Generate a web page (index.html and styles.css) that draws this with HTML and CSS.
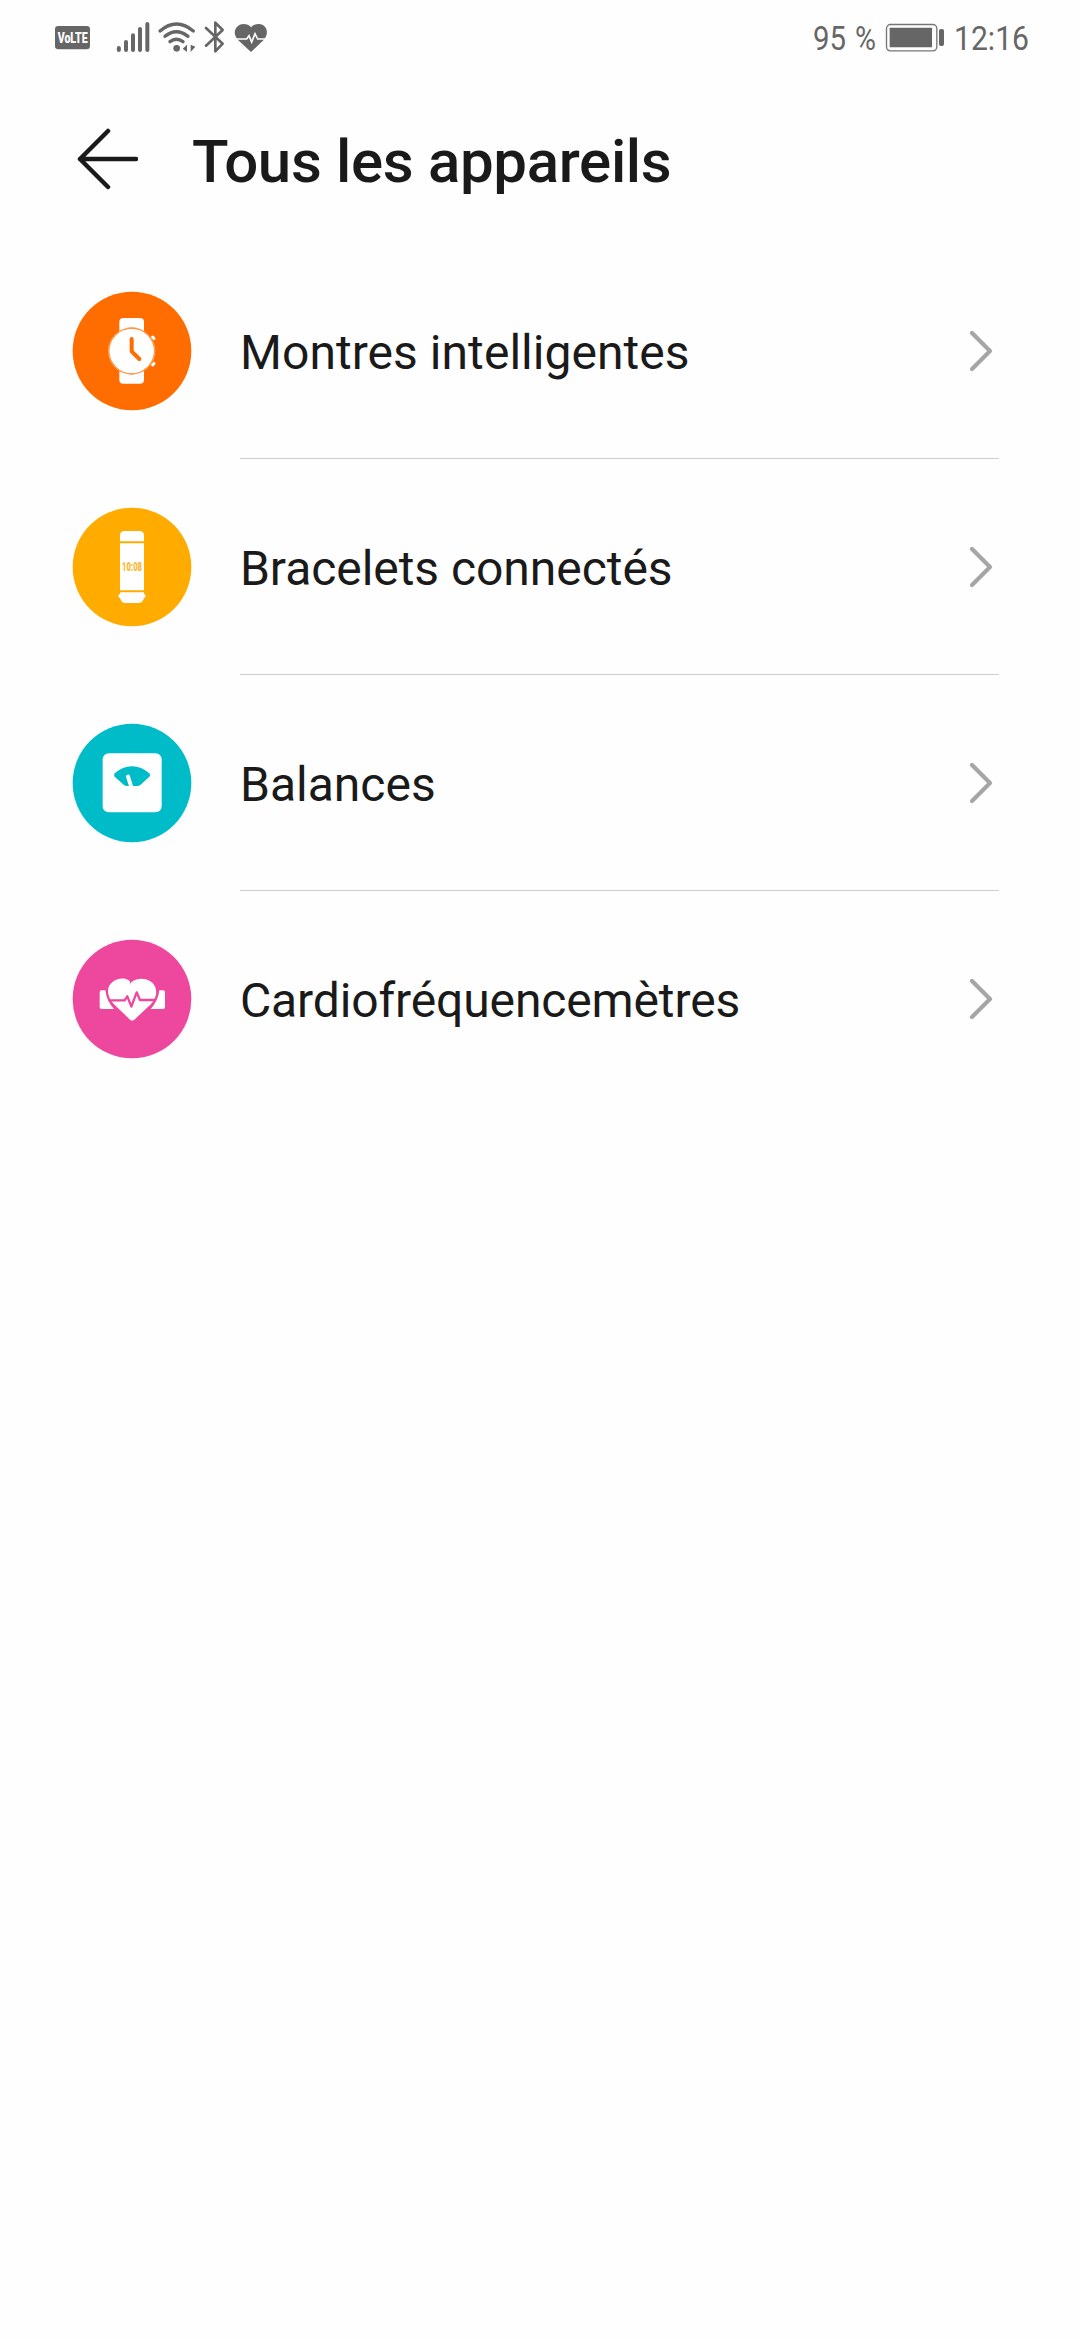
FILE: index.html
```html
<!DOCTYPE html>
<html lang="fr">
<head>
<meta charset="utf-8">
<title>Tous les appareils</title>
<link rel="stylesheet" href="styles.css">
</head>
<body>
<div class="status">
  <div class="status-group">
    <svg width="60" height="60" viewBox="45 0 180 180"><rect x="45" y="48" width="105" height="70" rx="10" fill="#666"/><text class="volte" x="53" y="100" textLength="90" lengthAdjust="spacingAndGlyphs">VoLTE</text></svg>
    <svg class="line" width="41" height="60" viewBox="225 0 123 180" stroke-width="12"><path d="M236.500 114v6M258 96v24M279 76v44M300 57v63M322 42v78"/></svg>
    <svg class="line" width="46" height="60" viewBox="348 0 138 180" stroke-width="10"><path d="M360 63Q409 21 460 63M375 79Q409 51 444 79M390 95Q409 80 429 95"/><circle cx="410" cy="115" r="10" fill="#666" stroke="none"/><path d="M441 104v22l-13-10zM452 104v22l14-16z" fill="#666" stroke="none"/></svg>
    <svg class="line" width="30" height="60" viewBox="486 0 90 180" stroke-width="8"><path d="M498 54l50 47-22 23V38l22 22-50 47"/></svg>
    <svg width="38" height="60" viewBox="576 0 114 180"><path d="M633 126L594 90C570 62 596 41 611 42Q625 42 633 52Q642 42 657 42C679 43 690 68 671 90Z" fill="#666"/><path d="M584 87h36l7-10 8 19 10-25 8 16h31" fill="none" stroke="#fff" stroke-width="5"/></svg>
  </div>
  <div class="status-group">
    <svg width="72" height="60" viewBox="0 0 72 60"><text class="stat" x="0" y="40" textLength="33" lengthAdjust="spacingAndGlyphs">95</text><text class="stat" x="42" y="40" textLength="21" lengthAdjust="spacingAndGlyphs">%</text></svg>
    <svg width="67" height="60" viewBox="252 0 201 180"><rect x="256.500" y="43.500" width="151" height="79" rx="12" fill="none" stroke="#777" stroke-width="4"/><rect x="266" y="53" width="127" height="59" rx="2" fill="#666"/><rect x="414" y="57" width="15" height="51" rx="6" fill="#666"/></svg>
    <svg width="80" height="60" viewBox="0 0 80 60"><text class="stat" x="2" y="40" textLength="75" lengthAdjust="spacingAndGlyphs">12:16</text></svg>
  </div>
</div>
<header class="header">
  <svg class="back" width="66" height="66" viewBox="0 0 66 66"><path d="M36 5L8 33l28 28M8 33h56"/></svg>
  <h1 class="title">Tous les appareils</h1>
</header>
<main class="list">
  <div class="row">
    <svg class="icon" viewBox="36 33 360 360"><circle cx="216" cy="213" r="178" fill="#ff6d00"/><path d="M178 157V126Q178 114 190 114H240Q252 114 252 126V157ZM178 270V299Q178 311 190 311H240Q252 311 252 299V270Z" fill="#fff"/><circle cx="215" cy="213" r="71" fill="#ff6d00"/><circle cx="215" cy="213" r="67" fill="#fff"/><circle cx="215" cy="213" r="69.500" fill="none" stroke="#ffe4cd" stroke-width="1.500"/><path d="M278 171l4 5M278 255l4-5" stroke="#fff" stroke-width="9" stroke-linecap="round"/><path d="M215 177v37l23 23" fill="none" stroke="#ff6d00" stroke-width="12" stroke-linecap="round" stroke-linejoin="round"/></svg>
    <div class="body"><span class="label label-watch">Montres intelligentes</span><svg class="chevron" width="24" height="42" viewBox="0 0 24 42"><path d="M3 3l18 18L3 39"/></svg></div>
  </div>
  <div class="row">
    <svg class="icon" viewBox="36 33 360 360"><circle cx="216" cy="213" r="178" fill="#ffab00"/><path d="M180 136V119Q180 105 194 105H238Q252 105 252 119V136ZM180 142H252V283H180ZM180 289H252V294Q257 295 257 300T252 306Q248 321 236 321H196Q184 321 180 306Q175 305 175 300T180 294Z" fill="#fff"/><text class="clock" x="186" y="226" textLength="60" lengthAdjust="spacingAndGlyphs">10:08</text></svg>
    <div class="body"><span class="label label-band">Bracelets connectés</span><svg class="chevron" width="24" height="42" viewBox="0 0 24 42"><path d="M3 3l18 18L3 39"/></svg></div>
  </div>
  <div class="row">
    <svg class="icon" viewBox="36 33 360 360"><circle cx="216" cy="213" r="178" fill="#00bcc9"/><rect x="128" y="124" width="177" height="177" rx="18" fill="#fff"/><path d="M164 184Q188 163 216 163T268 184Q273 189 268 194L241 219Q236 223 228 222H204Q197 223 192 219L164 194Q160 189 164 184Z" fill="#00bcc9"/><path d="M204 194l9 28" stroke="#fff" stroke-width="12" stroke-linecap="round"/></svg>
    <div class="body"><span class="label">Balances</span><svg class="chevron" width="24" height="42" viewBox="0 0 24 42"><path d="M3 3l18 18L3 39"/></svg></div>
  </div>
  <div class="row last">
    <svg class="icon" viewBox="36 33 360 360"><circle cx="216" cy="213" r="178" fill="#ee479e"/><path d="M136 187h-11q-6 0-6 6v44q0 6 6 6h37Q139 218 136 187ZM298 187h11q6 0 6 6v44q0 6-6 6h-37Q295 218 298 187Z" fill="#fff"/><path d="M210 275L162 229Q144 210 144 188C145 157 187 143 206 157Q214 162 207 171Q218 153 243 152C278 152 297 180 285 209Q280 221 271 230L223 275Q216 280 210 275Z" fill="#fff"/><path d="M146 217h48l8-12 12 31 16-43 10 23h48" fill="none" stroke="#ee479e" stroke-width="7" stroke-linejoin="round"/></svg>
    <div class="body"><span class="label label-heart">Cardiofréquencemètres</span><svg class="chevron" width="24" height="42" viewBox="0 0 24 42"><path d="M3 3l18 18L3 39"/></svg></div>
  </div>
</main>
</body>
</html>
```
FILE: styles.css
```css
* { box-sizing: border-box; }
body { margin: 0; min-height: 2340px; background: #fefefe; color: #1a1a1a; font-family: Roboto, "Liberation Sans", sans-serif; }
svg { display: block; flex: none; }
.status { display: flex; justify-content: space-between; height: 80px; padding: 10px 48px 0 55px; }
.status-group { display: flex; }
.line { fill: none; stroke: #666; stroke-linecap: round; stroke-linejoin: round; }
.volte { font: 900 46px Roboto, sans-serif; fill: #fff; }
.stat { font: 400 34px Roboto, sans-serif; fill: #666; }
.header { display: flex; align-items: center; gap: 54px; height: 163px; padding: 0 72px; }
.back { margin-top: -5px; fill: none; stroke: #1a1a1a; stroke-width: 4.5; stroke-linecap: round; stroke-linejoin: round; }
.title { margin: 0; font-size: 60px; font-weight: 500; line-height: 71px; letter-spacing: -0.33px; white-space: nowrap; }
.list { display: flex; flex-direction: column; padding: 0 81px 0 72px; }
.row { display: flex; align-items: center; gap: 48px; height: 216px; }
.icon { width: 120px; height: 120px; }
.body { display: flex; flex: 1; align-items: center; justify-content: space-between; height: 216px; padding-right: 6px; border-bottom: 1px solid #ccc; }
.last .body { border-bottom-color: transparent; }
.label { padding-top: 4px; font-size: 48px; line-height: 57px; white-space: nowrap; }
.label-watch { letter-spacing: 0.05px; }
.label-band { letter-spacing: -0.05px; }
.label-heart { letter-spacing: -0.13px; }
.chevron { fill: none; stroke: #a6a6a6; stroke-width: 4.2; stroke-linecap: round; stroke-linejoin: round; }
.clock { font: 900 36px Roboto, sans-serif; fill: #ffb733; }
```
